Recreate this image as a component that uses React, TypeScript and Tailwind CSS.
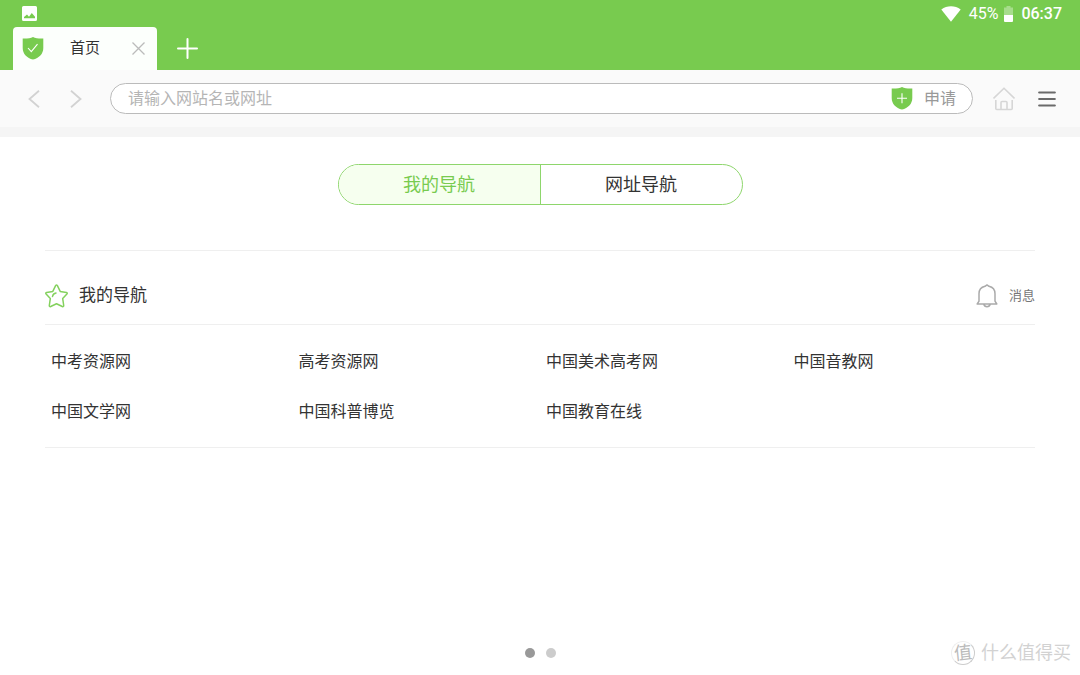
import type { ReactNode } from 'react';

const sites = [
  '中考资源网',
  '高考资源网',
  '中国美术高考网',
  '中国音教网',
  '中国文学网',
  '中国科普博览',
  '中国教育在线',
];

function Shield({ children }: { children: ReactNode }) {
  return (
    <svg width="22" height="24" viewBox="0 0 22 24" fill="none" className="shrink-0" aria-hidden="true">
      <path
        d="M11 0C13.500 1.200 17 1.700 21.300 1.500V11c0 6-4.300 10-10.300 11.600C5 21 .7 17 .7 11V1.500C5 1.700 8.500 1.200 11 0Z"
        fill="#78cb4f"
      />
      {children}
    </svg>
  );
}

function StatusBar() {
  return (
    <div className="flex h-[27px] items-center justify-between pr-[18px] pl-[22px] text-white">
      <svg width="15" height="15" viewBox="0 0 15 15" aria-hidden="true">
        <path
          d="M1.500 0h12A1.500 1.500 0 0 1 15 1.500v12a1.500 1.500 0 0 1-1.500 1.500h-12A1.500 1.500 0 0 1 0 13.500v-12A1.500 1.500 0 0 1 1.500 0ZM2 12.200h11V10.800L9.800 7 7 10.700 5 8.500 2 11Z"
          fill="currentColor"
          fillRule="evenodd"
        />
      </svg>
      <div className="flex items-center font-[Roboto,sans-serif] text-base leading-7">
        <svg width="20" height="16" viewBox="0 0 20 16" className="mr-2" aria-hidden="true">
          <path d="M.3 3.500C6 -.7 14 -.7 19.700 3.500L10 15.700Z" fill="currentColor" />
        </svg>
        <span>45%</span>
        <svg width="9" height="16" viewBox="0 0 9 16" className="mr-2 ml-1.5" aria-hidden="true">
          <path d="M2.500 0h4v1.500H9V9H0V1.500h2.500Z" fill="currentColor" opacity=".35" />
          <path d="M0 9h9v6a1 1 0 0 1-1 1H1a1 1 0 0 1-1-1Z" fill="currentColor" />
        </svg>
        <span className="font-medium">06:37</span>
      </div>
    </div>
  );
}

function TabStrip() {
  return (
    <div className="flex h-[43px] items-center gap-5 pl-[13px]">
      <div className="flex h-full w-36 items-center rounded-t bg-[#fcfffc] pr-3 pl-[9px]">
        <Shield>
          <path d="m6 11 3.300 3.700 6.200-7.500" stroke="#fff" strokeWidth="1.100" />
        </Shield>
        <span className="flex-1 pl-[26px] text-[15px] text-[#333]">首页</span>
        <button type="button" aria-label="关闭标签页">
          <svg width="13" height="13" viewBox="0 0 13 13" fill="none" stroke="#bbb" strokeWidth="1.300" aria-hidden="true">
            <path d="m.5.5 12 12M12.500.5l-12 12" />
          </svg>
        </button>
      </div>
      <button type="button" aria-label="新建标签页">
        <svg width="21" height="21" viewBox="0 0 21 21" fill="none" stroke="#fff" strokeWidth="2" strokeLinecap="round" aria-hidden="true">
          <path d="M10.500 1v19M1 10.500h19" />
        </svg>
      </button>
    </div>
  );
}

function Toolbar() {
  return (
    <div className="flex h-[67px] items-center border-b-10 border-[#f5f5f5] bg-[#fafafa] pr-6 pl-7">
      <button type="button" aria-label="后退" className="mr-[30px]">
        <svg width="12" height="18" viewBox="0 0 12 18" fill="none" stroke="#d2d2d2" strokeWidth="1.800" aria-hidden="true">
          <path d="M11 .8 1.500 9l9.500 8.200" />
        </svg>
      </button>
      <button type="button" aria-label="前进" className="mr-7">
        <svg width="12" height="18" viewBox="0 0 12 18" fill="none" stroke="#d2d2d2" strokeWidth="1.800" aria-hidden="true">
          <path d="M1 .8 10.500 9 1 17.200" />
        </svg>
      </button>
      <form className="flex h-[31px] flex-1 items-center rounded-full border border-[#bbb] bg-white pr-4 pl-[17px]">
        <input
          type="text"
          aria-label="网址"
          placeholder="请输入网站名或网址"
          className="min-w-0 flex-1 text-base leading-6 outline-none placeholder:text-[#b5b5b5]"
        />
        <button type="button" className="flex items-center gap-[11px] text-base leading-6 text-[#999]">
          <Shield>
            <path d="M11 6.200v10M6 11.200h10" stroke="#fff" strokeWidth="1.100" />
          </Shield>
          申请
        </button>
      </form>
      <button type="button" aria-label="主页" className="ml-5">
        <svg width="22" height="24" viewBox="0 0 22 24" fill="none" stroke="#d6d6d6" strokeWidth="1.600" strokeLinejoin="round" aria-hidden="true">
          <path d="M.5 11.500 11 1.200l10.500 10.300M2.800 13v8.500a1 1 0 0 0 1 1h14.400a1 1 0 0 0 1-1V13M8 22.500v-7a1 1 0 0 1 1-1h4a1 1 0 0 1 1 1v7" />
        </svg>
      </button>
      <button type="button" aria-label="菜单" className="ml-[23px]">
        <svg width="18" height="16" viewBox="0 0 18 16" fill="none" stroke="#6a6a6a" strokeWidth="2.200" strokeLinecap="round" aria-hidden="true">
          <path d="M1.200 1.500h15.600M1.200 8h15.600M1.200 14.500h15.600" />
        </svg>
      </button>
    </div>
  );
}

export default function App() {
  return (
    <div className="flex min-h-screen flex-col bg-white font-['Liberation_Sans','Noto_Sans_CJK_SC',sans-serif] text-[#333]">
      <header>
        <div className="bg-[#78cb4f]">
          <StatusBar />
          <TabStrip />
        </div>
        <Toolbar />
      </header>

      <main className="flex flex-1 flex-col px-[45px] pt-[27px]">
        <div className="mx-auto flex h-[41px] w-full max-w-[405px] overflow-hidden rounded-full border border-[#8ed66c] text-lg">
          <button type="button" className="flex-1 bg-[#f6ffef] text-[#78cb4f]">
            我的导航
          </button>
          <button type="button" className="flex-1 border-l border-[#8ed66c]">
            网址导航
          </button>
        </div>

        <section className="mt-[45px] border-y border-[#efefef]">
          <div className="flex h-[74px] items-center justify-between border-b border-[#efefef] pt-4">
            <h2 className="flex items-center gap-[11px] text-[17px]">
              <svg width="23" height="24" viewBox="0 0 23 24" fill="none" stroke="#84d15e" strokeWidth="1.500" strokeLinecap="round" strokeLinejoin="round" aria-hidden="true">
                <path d="M10.600 1.600q.9-1.200 1.800 0l2.800 5.800 6.200 1q1.400.4.500 1.600l-4.200 4.600 1 6.900q0 1.500-1.400 1l-5.800-2.700-5.800 2.700q-1.400.5-1.400-1l1-6.900L1.100 10q-.9-1.200.5-1.600l6.200-1Z" />
                <path d="M7.500 12.500q.5-3 3.500-3.500" />
              </svg>
              我的导航
            </h2>
            <button type="button" className="flex items-center gap-[11px] text-[13px] text-[#777]">
              <svg width="22" height="24" viewBox="0 0 22 24" fill="none" stroke="#aaa" strokeWidth="1.500" strokeLinejoin="round" aria-hidden="true">
                <path d="M11 .9 9 2.300C5.200 3.200 3 6.200 3 9.700v7.500L1.200 20h19.600L19 17.200V9.700c0-3.500-2.200-6.500-6-7.400ZM7.800 20.300c.8 3.200 5.600 3.200 6.400 0" />
              </svg>
              消息
            </button>
          </div>
          <ul className="grid grid-cols-4 gap-y-[26px] pt-[25px] pb-[23px] text-base leading-6">
            {sites.map((site) => (
              <li key={site} className="pl-1.5">
                <a href="#">{site}</a>
              </li>
            ))}
          </ul>
        </section>
      </main>

      <footer className="grid h-11 grid-cols-3 items-center px-[9px]">
        <div className="col-start-2 flex justify-center gap-[11px]">
          <span className="size-2.5 rounded-full bg-[#999]" />
          <span className="size-2.5 rounded-full bg-[#ccc]" />
        </div>
        <div className="flex items-center justify-end gap-1.5 text-lg text-[#d2d2d2]">
          <span className="flex size-6 items-center justify-center rounded-full border border-t-[#eee] border-r-[#ccc] border-b-[#ccc] border-l-[#eee] leading-6 text-[#bbb]">
            <span className="-rotate-6">值</span>
          </span>
          什么值得买
        </div>
      </footer>
    </div>
  );
}
